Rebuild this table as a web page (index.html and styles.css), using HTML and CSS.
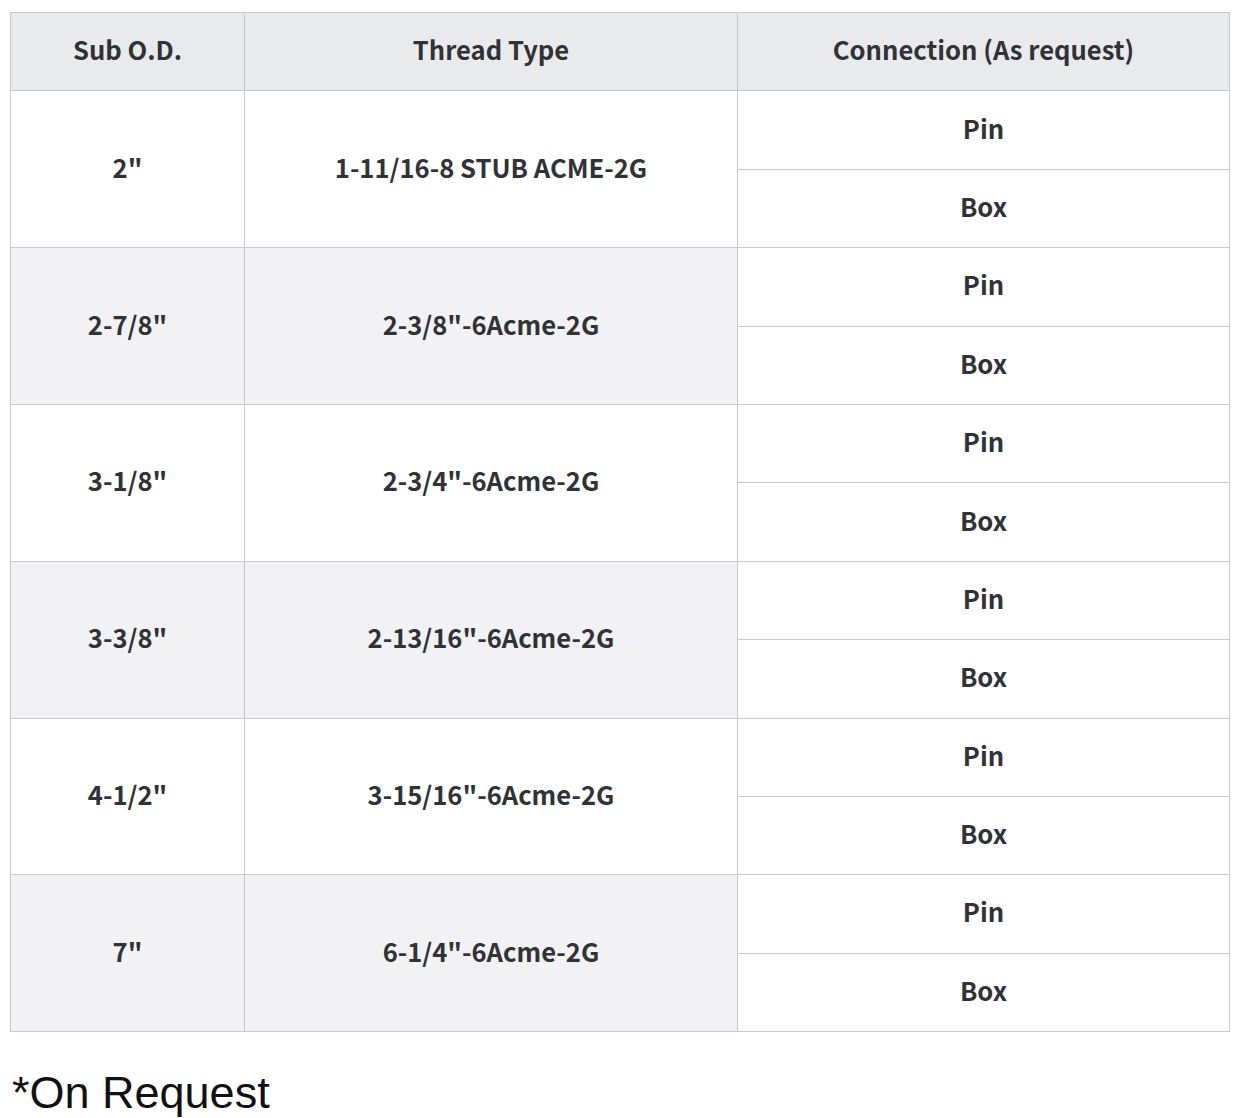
FILE: index.html
```html
<!DOCTYPE html>
<html lang="en">
<head>
<meta charset="utf-8">
<title>Sub Specifications</title>
<link rel="stylesheet" href="styles.css">
</head>
<body>
<div class="page">
  <table class="spec">
    <colgroup>
      <col class="c1"><col class="c2"><col class="c3">
    </colgroup>
    <thead>
      <tr><th>Sub O.D.</th><th>Thread Type</th><th>Connection (As request)</th></tr>
    </thead>
    <tbody>
      <tr><td rowspan="2">2"</td><td rowspan="2">1-11/16-8 STUB ACME-2G</td><td class="conn">Pin</td></tr>
      <tr><td class="conn">Box</td></tr>
      <tr class="alt"><td rowspan="2">2-7/8"</td><td rowspan="2">2-3/8"-6Acme-2G</td><td class="conn">Pin</td></tr>
      <tr class="alt"><td class="conn">Box</td></tr>
      <tr><td rowspan="2">3-1/8"</td><td rowspan="2">2-3/4"-6Acme-2G</td><td class="conn">Pin</td></tr>
      <tr><td class="conn">Box</td></tr>
      <tr class="alt"><td rowspan="2">3-3/8"</td><td rowspan="2">2-13/16"-6Acme-2G</td><td class="conn">Pin</td></tr>
      <tr class="alt"><td class="conn">Box</td></tr>
      <tr><td rowspan="2">4-1/2"</td><td rowspan="2">3-15/16"-6Acme-2G</td><td class="conn">Pin</td></tr>
      <tr><td class="conn">Box</td></tr>
      <tr class="alt"><td rowspan="2">7"</td><td rowspan="2">6-1/4"-6Acme-2G</td><td class="conn">Pin</td></tr>
      <tr class="alt"><td class="conn">Box</td></tr>
    </tbody>
  </table>
  <p class="note">*On Request</p>
</div>
</body>
</html>
```

FILE: styles.css
```css
html, body {
  margin: 0;
  padding: 0;
  background: #ffffff;
}

.page {
  padding: 12px 11px 0 10px;
}

.spec {
  width: 1219px;
  border-collapse: collapse;
  table-layout: fixed;
  font-family: "Noto Sans CJK KR", "Noto Sans", sans-serif;
  font-weight: 700;
  font-size: 25.6px;
  line-height: 36px;
  color: #2f3236;
}

.spec .c1 { width: 234px; }
.spec .c2 { width: 493px; }
.spec .c3 { width: 492px; }

.spec tr {
  height: 78.4px;
}

.spec th,
.spec td {
  border: 1px solid #c6c8cc;
  text-align: center;
  vertical-align: middle;
  padding: 0 0 5px 0;
  font-weight: 700;
}

.spec th {
  background: #e9eaec;
}

.spec td {
  background: #ffffff;
}

.spec tr.alt td {
  background: #f2f2f4;
}

.spec tr.alt td.conn {
  background: #ffffff;
}

.note {
  margin: 35px 0 0 2px;
  font-family: "Liberation Sans", Arial, sans-serif;
  font-size: 45px;
  line-height: 52px;
  color: #111111;
}
```
